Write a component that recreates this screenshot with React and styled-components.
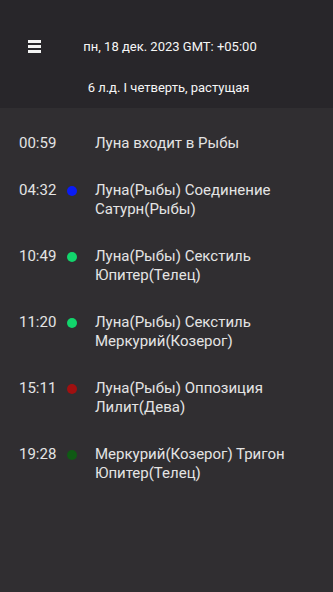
import React from 'react';
import styled, { createGlobalStyle } from 'styled-components';

const Global = createGlobalStyle`
    html, body {
        margin: 0;
        padding: 0;
        background: #302e31;
        font-family: Roboto, "Noto Sans", sans-serif;
    }
`

const Page = styled.div`
    width: 333px;
    min-height: 592px;
    background: #302e31;
`

const Header = styled.div`
    height: 108px;
    background: #28262a;
    display: flex;
    flex-direction: column;
    box-sizing: border-box;
    padding-top: 37px;
`

const TopRow = styled.div`
    display: flex;
    align-items: center;
    height: 18px;
    padding-left: 28px;
`

const Burger = styled.div`
    width: 13px;
    display: flex;
    flex-direction: column;
    gap: 2px;
    span {
        display: block;
        height: 3px;
        background: #f4f4f4;
    }
`

const DateText = styled.div`
    flex: 1;
    text-align: center;
    color: #f6f6f6;
    font-size: 13px;
    padding-right: 34px;
`

const Phase = styled.div`
    margin-top: 24px;
    padding-left: 4px;
    text-align: center;
    color: #f6f6f6;
    font-size: 13px;
    line-height: 18px;
`

const List = styled.div`
    padding: 26px 0 0 19px;
    display: flex;
    flex-direction: column;
    gap: 28px;
`

const Row = styled.div`
    display: flex;
    align-items: flex-start;
    color: #e4e4e4;
    font-size: 15px;
    line-height: 19px;
`

const Time = styled.div`
    width: 48px;
`

const DotSlot = styled.div`
    width: 28px;
    height: 19px;
    display: flex;
    align-items: center;
`

const Dot = styled.div`
    width: 10px;
    height: 10px;
    border-radius: 50%;
    background: ${p => p.color};
`

const Desc = styled.div`
    width: 220px;
`

const events = [
    { time: '00:59', text: 'Луна входит в Рыбы' },
    { time: '04:32', color: '#0a1cf5', text: 'Луна(Рыбы) Соединение Сатурн(Рыбы)' },
    { time: '10:49', color: '#12d56c', text: 'Луна(Рыбы) Секстиль Юпитер(Телец)' },
    { time: '11:20', color: '#12d56c', text: 'Луна(Рыбы) Секстиль Меркурий(Козерог)' },
    { time: '15:11', color: '#a01010', text: 'Луна(Рыбы) Оппозиция Лилит(Дева)' },
    { time: '19:28', color: '#0f5a14', text: 'Меркурий(Козерог) Тригон Юпитер(Телец)' },
]

const App = () => {
    return <Page>
        <Global />
        <Header>
            <TopRow>
                <Burger><span /><span /><span /></Burger>
                <DateText>пн, 18 дек. 2023 GMT: +05:00</DateText>
            </TopRow>
            <Phase>6 л.д. I четверть, растущая</Phase>
        </Header>
        <List>
            {events.map(e => (
                <Row key={e.time}>
                    <Time>{e.time}</Time>
                    <DotSlot>{e.color && <Dot color={e.color} />}</DotSlot>
                    <Desc>{e.text}</Desc>
                </Row>
            ))}
        </List>
    </Page>
}

export default App;
